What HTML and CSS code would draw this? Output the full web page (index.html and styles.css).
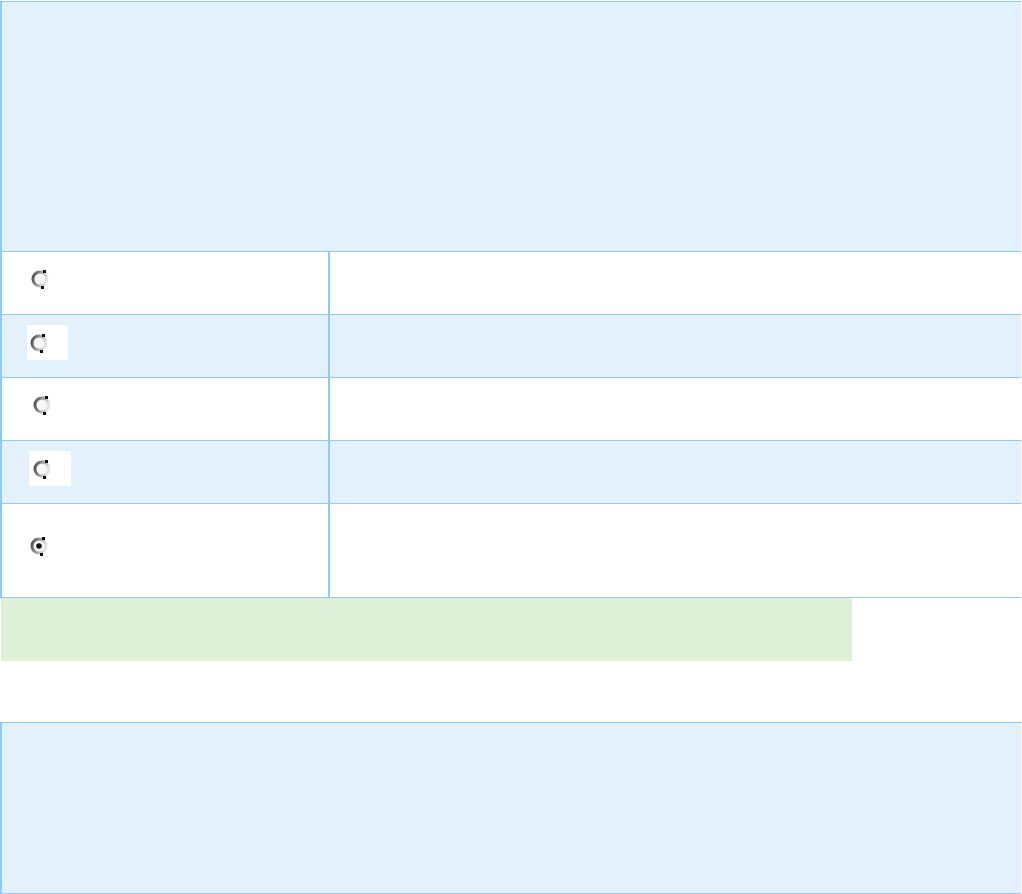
FILE: index.html
```html
<!DOCTYPE html>
<html lang="en">
  <head>
    <meta charset="UTF-8" />
    <meta name="viewport" content="width=device-width, initial-scale=1.0" />
    <title>Quiz</title>
    <link rel="stylesheet" href="styles.css">
  </head>
  <body>
    <div class="quiz">
      <div class="question"></div>
      <div class="option">
        <div class="choice-cell">
          <span class="radio"><svg width="20" height="20" viewBox="0 0 20 20"><defs><linearGradient id="ring" x1="0" y1="0.2" x2="1" y2="0.5"><stop offset="0" stop-color="#505050"/><stop offset="0.5" stop-color="#a0a0a0"/><stop offset="1" stop-color="#e6e6e6"/></linearGradient></defs><circle cx="10" cy="10" r="7" fill="#f7f7f7" stroke="url(#ring)" stroke-width="3"/><rect x="13" y="1" width="3" height="3" fill="#111"/><rect x="11" y="17" width="3" height="3" fill="#111"/></svg></span>
        </div>
        <div class="text-cell"></div>
      </div>
      <div class="option option-alt">
        <div class="choice-cell">
          <span class="answer-box"><span class="radio"><svg width="20" height="20" viewBox="0 0 20 20"><circle cx="10" cy="10" r="7" fill="#f7f7f7" stroke="url(#ring)" stroke-width="3"/><rect x="13" y="1" width="3" height="3" fill="#111"/><rect x="11" y="17" width="3" height="3" fill="#111"/></svg></span></span>
        </div>
        <div class="text-cell"></div>
      </div>
      <div class="option">
        <div class="choice-cell">
          <span class="radio radio-shift"><svg width="20" height="20" viewBox="0 0 20 20"><circle cx="10" cy="10" r="7" fill="#f7f7f7" stroke="url(#ring)" stroke-width="3"/><rect x="13" y="1" width="3" height="3" fill="#111"/><rect x="11" y="17" width="3" height="3" fill="#111"/></svg></span>
        </div>
        <div class="text-cell"></div>
      </div>
      <div class="option option-alt">
        <div class="choice-cell">
          <span class="answer-box answer-box-shift"><span class="radio"><svg width="20" height="20" viewBox="0 0 20 20"><circle cx="10" cy="10" r="7" fill="#f7f7f7" stroke="url(#ring)" stroke-width="3"/><rect x="13" y="1" width="3" height="3" fill="#111"/><rect x="11" y="17" width="3" height="3" fill="#111"/></svg></span></span>
        </div>
        <div class="text-cell"></div>
      </div>
      <div class="option option-tall">
        <div class="choice-cell">
          <span class="radio"><svg width="20" height="20" viewBox="0 0 20 20"><circle cx="10" cy="10" r="7" fill="#f7f7f7" stroke="url(#ring)" stroke-width="3"/><circle cx="10" cy="10" r="2.8" fill="#111"/><rect x="13" y="1" width="3" height="3" fill="#111"/><rect x="11" y="17" width="3" height="3" fill="#111"/></svg></span>
        </div>
        <div class="text-cell"></div>
      </div>
    </div>
    <div class="feedback"></div>
    <div class="next-panel"></div>
  </body>
</html>
```

FILE: styles.css
```css
body {
  margin: 0;
  padding: 1px 0 0;
  background-color: #ffffff;
  font-family: "Liberation Sans", Arial, sans-serif;
  overflow: hidden;
}

.quiz {
  width: 1019px;
  border-left: 2px solid #90caf9;
  border-top: 1px solid #90caf9;
}

.question {
  height: 249px;
  background-color: #e3f1fc;
  border-bottom: 1px solid #90caf9;
}

.option {
  display: flex;
  height: 62px;
  background-color: #ffffff;
  border-bottom: 1px solid #90caf9;
}

.option-alt {
  background-color: #e3f1fc;
}

.option-tall {
  height: 93px;
}

.choice-cell {
  box-sizing: border-box;
  width: 328px;
  padding: 17px 0 0 28px;
  border-right: 2px solid #90caf9;
  display: flex;
  align-items: flex-start;
}

.option-alt .choice-cell {
  padding: 10px 0 0 25px;
}

.option-tall .choice-cell {
  padding-top: 32px;
  padding-left: 27px;
}

.text-cell {
  flex: 1;
}

.radio {
  display: block;
  width: 20px;
  height: 20px;
}

.radio svg {
  display: block;
}

.radio-shift {
  margin-left: 2px;
}

.answer-box {
  display: block;
  background: #ffffff;
  padding: 8px 19px 7px 2px;
}

.answer-box-shift {
  margin-left: 2px;
}

.answer-box-shift .radio {
  margin-left: 1px;
}

.feedback {
  width: 851px;
  height: 63px;
  margin-left: 1px;
  background-color: #dff0d8;
}

.next-panel {
  margin-top: 61px;
  width: 1019px;
  height: 170px;
  background-color: #e3f1fc;
  border-left: 2px solid #90caf9;
  border-top: 1px solid #90caf9;
  border-bottom: 1px solid #90caf9;
}
```
